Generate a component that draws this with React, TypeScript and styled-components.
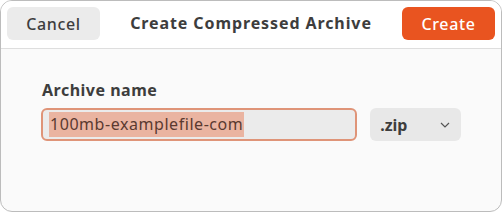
import React from 'react';
import styled, { createGlobalStyle } from 'styled-components';

const GlobalStyle = createGlobalStyle`
  html, body {
    margin: 0;
    padding: 0;
    background: #ffffff;
  }
  body {
    font-family: "Noto Sans", "Open Sans", sans-serif;
    color: #3d3d3d;
  }
  ::selection {
    background: #eab4a1;
  }
`;

const Window = styled.div`
  box-sizing: border-box;
  width: 502px;
  height: 212px;
  border: 1px solid #bcbcbc;
  border-radius: 12px;
  background: #fafafa;
  overflow: hidden;
  display: flex;
  flex-direction: column;
`;

const HeaderBar = styled.div`
  box-sizing: border-box;
  height: 48px;
  padding: 6px 6px 0 6px;
  background: #ffffff;
  border-bottom: 1px solid #dedede;
  display: flex;
  align-items: flex-start;
  justify-content: space-between;
`;

const HeaderButton = styled.button<{ $suggested?: boolean }>`
  box-sizing: border-box;
  height: 33px;
  width: 93px;
  border: none;
  border-radius: 6px;
  font-family: inherit;
  font-size: 16px;
  font-weight: 500;
  letter-spacing: 0.6px;
  padding: 0;
  background: ${(p) => (p.$suggested ? '#e95420' : '#ebebeb')};
  color: ${(p) => (p.$suggested ? '#ffffff' : '#3d3d3d')};
`;

const Title = styled.div`
  font-size: 16px;
  font-weight: 700;
  letter-spacing: 0.9px;
  line-height: 33px;
  color: #3d3d3d;
`;

const Content = styled.div`
  padding: 30px 40px 0 40px;
  display: flex;
  flex-direction: column;
  gap: 7px;
`;

const Label = styled.div`
  font-size: 16px;
  font-weight: 700;
  letter-spacing: 0.5px;
  color: #3d3d3d;
  padding-left: 1px;
`;

const Row = styled.div`
  display: flex;
  gap: 13px;
`;

const Entry = styled.div`
  box-sizing: border-box;
  width: 317px;
  height: 33px;
  border: 2px solid #df9478;
  border-radius: 6px;
  background: #ebebeb;
  padding: 0 6px;
  display: flex;
  align-items: center;
`;

const Selected = styled.span`
  background: #eab4a1;
  font-size: 16px;
  letter-spacing: 0.55px;
  line-height: 25px;
  color: #5a3a30;
  padding: 0 1px;
`;

const Dropdown = styled.div`
  box-sizing: border-box;
  width: 91px;
  height: 33px;
  border-radius: 6px;
  background: #e8e8e8;
  padding: 0 10px 0 10px;
  display: flex;
  align-items: center;
  justify-content: space-between;
  font-size: 16px;
  font-weight: 700;
  color: #3d3d3d;
`;

const Chevron = () => (
  <svg width="12" height="8" viewBox="0 0 12 8">
    <path d="M2 2 L6 6 L10 2" fill="none" stroke="#555" strokeWidth="1.2" />
  </svg>
);

export default function App() {
  return (
    <>
      <GlobalStyle />
      <Window>
        <HeaderBar>
          <HeaderButton>Cancel</HeaderButton>
          <Title>Create Compressed Archive</Title>
          <HeaderButton $suggested>Create</HeaderButton>
        </HeaderBar>
        <Content>
          <Label>Archive name</Label>
          <Row>
            <Entry>
              <Selected>100mb-examplefile-com</Selected>
            </Entry>
            <Dropdown>
              <span>.zip</span>
              <Chevron />
            </Dropdown>
          </Row>
        </Content>
      </Window>
    </>
  );
}
